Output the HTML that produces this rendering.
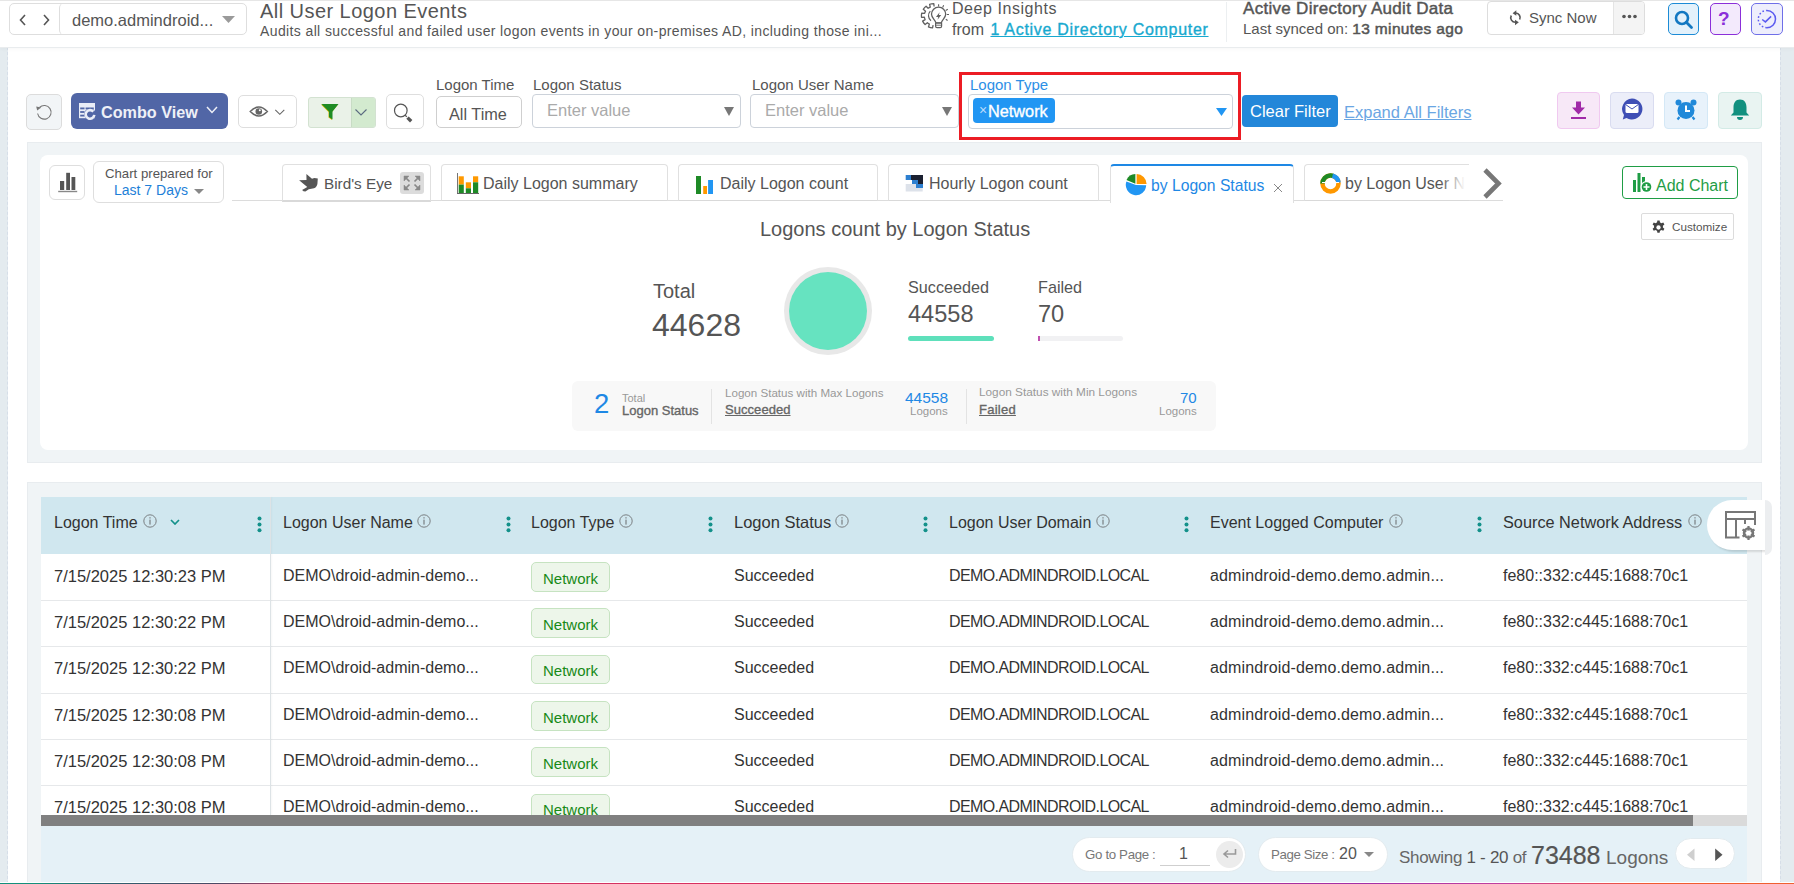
<!DOCTYPE html>
<html><head><meta charset="utf-8">
<style>
*{box-sizing:border-box;margin:0;padding:0}
html,body{width:1794px;height:884px;overflow:hidden;background:#fff;font-family:"Liberation Sans",sans-serif;color:#555}
.a{position:absolute}
.t{position:absolute;white-space:nowrap;line-height:1}
</style></head><body>
<!-- page strips -->
<div class="a" style="left:0;top:47px;width:8px;height:837px;background:#e4ebef;border-right:1px dashed #d6dee8"></div>
<div class="a" style="left:1780px;top:47px;width:14px;height:837px;background:#e4ebef;border-left:1px dashed #d6dee8"></div>
<!-- header -->
<div class="a" style="left:0;top:0;width:1794px;height:48px;background:#fff;border-bottom:1px solid #e9ecee;box-shadow:0 2px 3px rgba(0,0,0,.025)"></div>
<div class="a" style="left:0;top:0;width:1794px;height:1px;background:#e6e6e6"></div>


<!-- HEADER CONTENT -->
<div class="a" style="left:9px;top:3px;width:238px;height:32px;border:1px solid #dedede;border-radius:5px"></div>
<div class="a" style="left:59px;top:3px;width:188px;height:32px;border-left:1px solid #dedede;border-radius:5px"></div>
<svg class="a" style="left:18px;top:14px" width="34" height="12" viewBox="0 0 34 12"><path d="M7 1 L2.5 6 L7 11" fill="none" stroke="#555" stroke-width="1.6"/><path d="M26 1 L30.5 6 L26 11" fill="none" stroke="#555" stroke-width="1.6"/></svg>
<div class="t" style="left:72px;top:12px;font-size:16.5px;color:#555">demo.admindroid...</div>
<svg class="a" style="left:222px;top:16px" width="13" height="7"><path d="M0 0 H13 L6.5 7 Z" fill="#9a9a9a"/></svg>

<div class="t" style="left:260px;top:1px;font-size:20px;letter-spacing:0.45px;color:#555">All User Logon Events</div>
<div class="t" style="left:260px;top:24px;font-size:14px;letter-spacing:0.38px;color:#555">Audits all successful and failed user logon events in your on-premises AD, including those ini...</div>

<svg class="a" style="left:914px;top:0px" width="40" height="32" viewBox="0 0 40 32">
 <path d="M20.09 6.51 L19.81 3.60 A12.2 12.2 0 0 0 15.63 4.26 L16.27 7.12 A9.3 9.3 0 0 0 14.13 8.28 L12.09 6.19 A12.2 12.2 0 0 0 9.25 9.33 L11.55 11.15 A9.3 9.3 0 0 0 10.62 13.39 L7.71 13.06 A12.2 12.2 0 0 0 7.49 17.29 L10.41 17.25 A9.3 9.3 0 0 0 11.10 19.58 L8.63 21.15 A12.2 12.2 0 0 0 11.13 24.58 L13.38 22.71 A9.3 9.3 0 0 0 15.38 24.09 L14.44 26.86 A12.2 12.2 0 0 0 18.54 27.95 L19.11 25.09 " fill="none" stroke="#606060" stroke-width="1.3" stroke-linejoin="round"/>
 <path d="M16.3 11.2 A6.5 6.5 0 0 0 17 20.8" fill="none" stroke="#606060" stroke-width="1.2"/>
 <path d="M22 23 C21.5 20 17.5 18 17.5 14.3 A7.1 7.1 0 0 1 31.7 14.3 C31.7 18 27.7 20 27.2 23 Z" fill="#fff" stroke="#606060" stroke-width="1.3" stroke-linejoin="round"/>
 <path d="M21.6 23.2 H27.6 V26.2 Q27.6 27.6 26.2 27.6 H23 Q21.6 27.6 21.6 26.2 Z" fill="#fff" stroke="#606060" stroke-width="1.2"/>
 <path d="M21.8 25.2 H27.4" stroke="#606060" stroke-width="0.9"/>
 <path d="M25.6 12.2 L22 16.9 H24.3 L23.5 19.8 L27.2 15 H24.9 Z" fill="#606060"/>
 <path d="M24.6 4.2 V6.4 M29.7 5.3 L28.6 7.4 M33.8 9.3 L31.7 10.5 M35 14.5 H32.8 M33.6 20.5 L31.8 19.3" stroke="#606060" stroke-width="1.1"/>
</svg>
<div class="t" style="left:952px;top:1px;font-size:16px;letter-spacing:0.55px;color:#555">Deep Insights</div>
<div class="t" style="left:952px;top:22px;font-size:16px;color:#555">from <span style="color:#17a9cf;text-decoration:underline;letter-spacing:0.7px;margin-left:2px;-webkit-text-stroke:0.35px #17a9cf">1 Active Directory Computer</span></div>
<div class="a" style="left:1226px;top:2px;width:1px;height:40px;background:#eceff1"></div>
<div class="t" style="left:1243px;top:0px;font-size:17px;letter-spacing:0.3px;-webkit-text-stroke:0.45px #555;color:#555">Active Directory Audit Data</div>
<div class="t" style="left:1243px;top:21px;font-size:15px;color:#555">Last synced on: <span style="-webkit-text-stroke:0.5px #555;letter-spacing:0.35px;font-size:15.5px">13 minutes ago</span></div>

<div class="a" style="left:1487px;top:1px;width:158px;height:34px;border:1px solid #ddd;border-radius:4px;overflow:hidden"><div class="a" style="left:125px;top:0;width:33px;height:34px;background:#f4f4f4;border-left:1px solid #e4e4e4"></div></div>
<svg class="a" style="left:1508px;top:9px" width="16" height="17" viewBox="0 0 16 17"><path d="M7.8 4 A4.6 4.6 0 0 1 11.7 10.5" fill="none" stroke="#555" stroke-width="1.6"/><path d="M3.3 6.5 A4.6 4.6 0 0 0 7.5 13.3" fill="none" stroke="#555" stroke-width="1.6"/><path d="M8.3 1.2 L4.6 4.2 L8.3 6.8z" fill="#555"/><path d="M7 10.7 L10.8 13.3 L7 16.2z" fill="#555"/></svg>
<div class="t" style="left:1529px;top:10px;font-size:15px;color:#555">Sync Now</div>
<svg class="a" style="left:1622px;top:14px" width="15" height="5"><circle cx="2" cy="2.5" r="1.8" fill="#555"/><circle cx="7.5" cy="2.5" r="1.8" fill="#555"/><circle cx="13" cy="2.5" r="1.8" fill="#555"/></svg>

<div class="a" style="left:1668px;top:3px;width:31px;height:32px;border:1.5px solid #1c8bd6;border-radius:5px;background:#e3f1fb"></div>
<svg class="a" style="left:1674px;top:10px" width="20" height="20" viewBox="0 0 20 20"><circle cx="8" cy="8" r="6" fill="none" stroke="#1278c2" stroke-width="2.6"/><path d="M12.3 12.3 L17.5 17.5" stroke="#1278c2" stroke-width="2.8" stroke-linecap="round"/></svg>
<div class="a" style="left:1710px;top:3px;width:31px;height:32px;border:1.5px solid #8b2fd9;border-radius:5px;background:#f3eafc"></div>
<div class="t" style="left:1718px;top:9px;font-size:19px;font-weight:700;color:#8b2fd9">?</div>
<div class="a" style="left:1751px;top:3px;width:32px;height:32px;border:1.5px solid #6f6fe8;border-radius:5px;background:#eeeefc"></div>
<svg class="a" style="left:1757px;top:9px" width="21" height="21" viewBox="0 0 21 21"><path d="M9.9 1.5 A8.6 8.6 0 0 1 9.9 18.7" fill="none" stroke="#5b5bf0" stroke-width="1.5"/><path d="M9.9 18.7 A8.6 8.6 0 0 1 9.9 1.5" fill="none" stroke="#5b5bf0" stroke-width="1.5" stroke-dasharray="1.6 2.1"/><path d="M5.2 10.5 L8.4 12.9 L14.1 7.4" fill="none" stroke="#5b5bf0" stroke-width="1.5"/></svg>

<!-- content panels -->
<div class="a" style="left:27px;top:142px;width:1735px;height:321px;background:#f0f4f6;border:1px solid #e8ecef"></div>
<div class="a" style="left:40px;top:155px;width:1708px;height:295px;background:#fff;border-radius:8px"></div>
<div class="a" style="left:27px;top:482px;width:1735px;height:402px;background:#f0f4f6;border:1px solid #e8ecef"></div>


<!-- TOOLBAR -->
<div class="a" style="left:26px;top:94px;width:36px;height:36px;border:1px solid #dcdcdc;border-radius:5px;background:#f2f5f7"></div>
<svg class="a" style="left:34px;top:102px" width="20" height="20" viewBox="0 0 20 20"><path d="M5.5 5.5 A6.8 6.8 0 1 1 3.6 11.5" fill="none" stroke="#777" stroke-width="1.1"/><path d="M2.2 4.5 L7.2 5.6 L3.2 8.6z" fill="#777"/></svg>
<div class="a" style="left:71px;top:93px;width:157px;height:36px;border-radius:6px;background:#5166a6"></div>
<svg class="a" style="left:79px;top:103px" width="18" height="17" viewBox="0 0 18 17"><rect x="0" y="0" width="16" height="15.2" fill="#e9edf7"/><rect x="1.2" y="4.5" width="4.3" height="1.8" fill="#5166a6"/><rect x="1.2" y="8.1" width="4.3" height="1.8" fill="#5166a6"/><rect x="1.2" y="11.7" width="4.3" height="1.8" fill="#5166a6"/><rect x="6.6" y="4.5" width="8.2" height="1.8" fill="#5166a6"/><circle cx="11" cy="11.2" r="5.8" fill="#5166a6"/><path d="M14.3 8.6 A4.3 4.3 0 1 0 15.3 11.8" fill="none" stroke="#e9edf7" stroke-width="2.6"/><circle cx="11" cy="11.2" r="1.8" fill="#5166a6"/></svg>
<div class="t" style="left:101px;top:104px;font-size:16.2px;font-weight:700;color:#eef0f7">Combo View</div>
<svg class="a" style="left:206px;top:106px" width="12" height="8"><path d="M1 1 L6 6.5 L11 1" fill="none" stroke="#eef0f7" stroke-width="1.5"/></svg>

<div class="a" style="left:238px;top:95px;width:59px;height:33px;border:1px solid #dedede;border-radius:5px;background:#fff"></div>
<svg class="a" style="left:249px;top:104px" width="38" height="14" viewBox="0 0 38 14"><path d="M1.3 7.5 Q9.8 -1.5 18.3 7.5 Q9.8 16.5 1.3 7.5z" fill="none" stroke="#666" stroke-width="1.6"/><circle cx="9.8" cy="7.5" r="3.3" fill="#666"/><circle cx="10.8" cy="6.3" r="1" fill="#fff"/><path d="M26.3 5.8 L30.8 10.3 L35.3 5.8" fill="none" stroke="#666" stroke-width="1.1"/></svg>

<div class="a" style="left:308px;top:97px;width:68px;height:31px;border:1px solid #d3e2d1;border-radius:3px;background:#eaf2e8;overflow:hidden"><div class="a" style="left:42px;top:0;width:26px;height:31px;background:#d3eacf;border-left:1px solid #c8dcc5"></div></div>
<svg class="a" style="left:320px;top:103px" width="20" height="18" viewBox="0 0 20 18"><path d="M1 1.5 H18 L12 9 V17 L8.5 14.5 V9z" fill="#c9b400"/><path d="M1.5 1 H18.5 L12.5 8.5 V16.5 L9 14 V8.5z" fill="#1f8c24"/></svg>
<svg class="a" style="left:354px;top:108px" width="14" height="9"><path d="M1.5 1.5 L7 7 L12.5 1.5" fill="none" stroke="#5a6a80" stroke-width="1.1"/></svg>

<div class="a" style="left:386px;top:94px;width:38px;height:35px;border:1px solid #dedede;border-radius:5px;background:#fff"></div>
<svg class="a" style="left:392px;top:102px" width="24" height="24" viewBox="0 0 24 24"><circle cx="8.8" cy="8.5" r="6.3" fill="none" stroke="#555" stroke-width="1.2"/><path d="M13.2 13.3 L14.8 14.9" stroke="#555" stroke-width="1.3"/><path d="M15.5 15.6 L19.2 19.2" stroke="#555" stroke-width="3.4"/></svg>

<div class="t" style="left:436px;top:77.3px;font-size:15px;color:#555">Logon Time</div>
<div class="a" style="left:436px;top:96px;width:86px;height:32px;border:1px solid #cfcfcf;border-radius:5px;background:#fff"></div>
<div class="t" style="left:449px;top:105.5px;font-size:16.3px;color:#555">All Time</div>

<div class="t" style="left:533px;top:77.3px;font-size:15px;color:#555">Logon Status</div>
<div class="a" style="left:532px;top:94px;width:209px;height:34px;border:1px solid #ccd2da;border-radius:4px;background:#fff"></div>
<div class="t" style="left:547px;top:102.3px;font-size:16.5px;color:#aaa">Enter value</div>
<svg class="a" style="left:724px;top:107px" width="10" height="9"><path d="M0 0 H10 L5 9z" fill="#777"/></svg>

<div class="t" style="left:752px;top:77.3px;font-size:15px;color:#555">Logon User Name</div>
<div class="a" style="left:750px;top:94px;width:209px;height:34px;border:1px solid #ccd2da;border-radius:4px;background:#fff"></div>
<div class="t" style="left:765px;top:102.3px;font-size:16.5px;color:#aaa">Enter value</div>
<svg class="a" style="left:942px;top:107px" width="10" height="9"><path d="M0 0 H10 L5 9z" fill="#777"/></svg>

<div class="a" style="left:959px;top:72px;width:282px;height:68px;border:3px solid #ec1c24"></div>
<div class="t" style="left:970px;top:77.3px;font-size:15px;color:#2d8fe6">Logon Type</div>
<div class="a" style="left:968px;top:94px;width:265px;height:35px;border:1px solid #ccd2da;border-radius:4px;background:#fff"></div>
<div class="a" style="left:973px;top:98px;width:82px;height:25px;border-radius:4px;background:#2196f3"></div>
<div class="t" style="left:979px;top:103px;font-size:14px;color:#b9dcfb">×</div>
<div class="t" style="left:988px;top:102.5px;font-size:16.3px;-webkit-text-stroke:0.35px #fff;color:#fff">Network</div>
<svg class="a" style="left:1216px;top:108px" width="11" height="8"><path d="M0 0 H11 L5.5 8z" fill="#2196f3"/></svg>

<div class="a" style="left:1242px;top:95px;width:96px;height:32px;border-radius:4px;background:#2387d9"></div>
<div class="t" style="left:1250px;top:103px;font-size:16.5px;color:#fff">Clear Filter</div>
<div class="t" style="left:1344px;top:104px;font-size:16.5px;color:#6aa6e3;text-decoration:underline">Expand All Filters</div>

<div class="a" style="left:1557px;top:92px;width:43px;height:37px;border:1px solid #f0c9f0;border-radius:4px;background:#f7e8f7"></div>
<svg class="a" style="left:1570px;top:101px" width="17" height="19" viewBox="0 0 17 19"><path d="M6 0.5 h5 v6 h4 L8.5 13.5 L2 6.5 h4z" fill="#a02aa8"/><rect x="1" y="16" width="15" height="2" fill="#a02aa8"/></svg>
<div class="a" style="left:1610px;top:92px;width:44px;height:37px;border:1px solid #d9dcf0;border-radius:4px;background:#eceef9"></div>
<svg class="a" style="left:1620px;top:97px" width="24" height="24" viewBox="0 0 24 24"><path d="M12 1.5 a10.5 10.5 0 1 1 -5.5 19.5 L2.8 22.5 L4 18 A10.5 10.5 0 0 1 12 1.5z" fill="#3f4fb5"/><rect x="5.5" y="7" width="13" height="9" rx="1.5" fill="#fff"/><path d="M6 7.8 L12 12 L18 7.8" fill="none" stroke="#3f4fb5" stroke-width="1"/></svg>
<div class="a" style="left:1664px;top:92px;width:44px;height:37px;border:1px solid #d4e8f6;border-radius:4px;background:#e8f2fb"></div>
<svg class="a" style="left:1675px;top:99px" width="22" height="22" viewBox="0 0 22 22"><circle cx="3.5" cy="3.5" r="3" fill="#2189d9"/><circle cx="18.5" cy="3.5" r="3" fill="#2189d9"/><circle cx="11" cy="11.5" r="8.5" fill="#2189d9"/><path d="M11 6.5 V12 H15" fill="none" stroke="#fff" stroke-width="2"/><path d="M4.5 18 L2.5 20.5 M17.5 18 L19.5 20.5" stroke="#2189d9" stroke-width="2.2"/></svg>
<div class="a" style="left:1718px;top:92px;width:44px;height:37px;border:1px solid #d3ebe6;border-radius:4px;background:#e9f4f2"></div>
<svg class="a" style="left:1730px;top:98px" width="20" height="23" viewBox="0 0 20 23"><path d="M10 1.5 c-4.5 0 -6.5 3.5 -6.5 8 v5 L0.8 17.5 H19.2 L16.5 14.5 V9.5 c0 -4.5 -2 -8 -6.5 -8z" fill="#11907f"/><path d="M7 19 a3 3 0 0 0 6 0z" fill="#11907f"/></svg>


<!-- CHART PANEL -->
<div class="a" style="left:49px;top:165px;width:36px;height:35px;border:1px solid #dedede;border-radius:6px;background:#fff"></div>
<svg class="a" style="left:57px;top:172px" width="22" height="21" viewBox="0 0 22 21"><rect x="3" y="9" width="4.2" height="9" fill="#555"/><rect x="9.2" y="0.8" width="3.8" height="17.2" fill="#555"/><rect x="14.5" y="5" width="3.8" height="13" fill="#555"/><rect x="1.2" y="18.8" width="19" height="1.4" fill="#888"/></svg>
<div class="a" style="left:93px;top:161px;width:131px;height:42px;border:1px solid #dedede;border-radius:6px;background:#fff"></div>
<div class="t" style="left:105px;top:167px;font-size:13.2px;color:#555">Chart prepared for</div>
<div class="t" style="left:114px;top:183px;font-size:14px;color:#1e7fd8">Last 7 Days</div>
<svg class="a" style="left:194px;top:189px" width="10" height="5"><path d="M0 0 H10 L5 5z" fill="#888"/></svg>

<div class="a" style="left:232px;top:200px;width:1271px;height:1px;background:#dcdcdc"></div>
<!-- tabs -->
<div class="a" style="left:282px;top:164px;width:149px;height:38px;border:1px solid #e0e0e0;border-bottom:2px solid #d9d9d9;border-radius:4px 4px 0 0;background:#fff"></div>
<svg class="a" style="left:298px;top:173px" width="21" height="20" viewBox="0 0 21 20"><path d="M8.4 0.9 L14 5.8 L16.3 5 L19.8 5.4 L19.4 11 Q18.6 14.6 16 15.2 L10.8 16.2 L7.4 18.6 Q5.2 18.6 4.1 16.9 L9.3 14 L1.1 7.2 L8.5 6.9 Z" fill="#555"/></svg>
<div class="t" style="left:324px;top:176px;font-size:15.3px;color:#555">Bird's Eye</div>
<div class="a" style="left:400px;top:172px;width:24px;height:22px;border-radius:3px;background:#dcdcdc"></div>
<svg class="a" style="left:402px;top:174px" width="20" height="18" viewBox="0 0 20 18"><g fill="#888" stroke="#888" stroke-width="1.7"><path d="M3 3 L7.5 7.5 M17 3 L12.5 7.5 M3 15 L7.5 10.5 M17 15 L12.5 10.5" fill="none"/><path d="M2 2 H7 L2 7z M18 2 H13 L18 7z M2 16 H7 L2 11z M18 16 H13 L18 11z" stroke-width="0.5"/></g></svg>

<div class="a" style="left:441px;top:164px;width:227px;height:37px;border:1px solid #e0e0e0;border-bottom:1px solid #d9d9d9;border-radius:4px 4px 0 0;background:#fff"></div>
<svg class="a" style="left:457px;top:173px" width="23" height="21" viewBox="0 0 23 21"><rect x="0" y="0" width="0.9" height="21" fill="#666"/><rect x="0" y="20" width="22" height="1" fill="#666"/><rect x="1.7" y="3.3" width="5.1" height="8.3" fill="#ff9900"/><rect x="1.7" y="11.6" width="5.1" height="8.4" fill="#1e8a26"/><rect x="8.8" y="9.3" width="5.2" height="6" fill="#ff9900"/><rect x="8.8" y="15.3" width="5.2" height="4.7" fill="#1e8a26"/><rect x="16" y="3.3" width="5.2" height="6" fill="#ff9900"/><rect x="16" y="9.3" width="5.2" height="10.7" fill="#1e8a26"/></svg>
<div class="t" style="left:483px;top:176px;font-size:16px;color:#555">Daily Logon summary</div>

<div class="a" style="left:678px;top:164px;width:200px;height:37px;border:1px solid #e0e0e0;border-bottom:1px solid #d9d9d9;border-radius:4px 4px 0 0;background:#fff"></div>
<svg class="a" style="left:695px;top:176px" width="19" height="19" viewBox="0 0 19 19"><rect x="1" y="0" width="5" height="18" fill="#1e8a26"/><rect x="8.2" y="10" width="3.8" height="8" fill="#ff9900"/><rect x="13.1" y="4" width="4.9" height="14" fill="#2196f3"/></svg>
<div class="t" style="left:720px;top:176px;font-size:16px;color:#555">Daily Logon count</div>

<div class="a" style="left:888px;top:164px;width:211px;height:37px;border:1px solid #e0e0e0;border-bottom:1px solid #d9d9d9;border-radius:4px 4px 0 0;background:#fff"></div>
<svg class="a" style="left:905px;top:174px" width="19" height="18" viewBox="0 0 19 18"><rect x="0.7" y="10" width="17" height="7.5" fill="#dde2ea"/><path d="M0.7 1 H18 V14 H11 V10 H7 V6 H0.7z" fill="#2d7fd0"/><path d="M6 1 H18 V10 H13 V6 H6z" fill="#1b2030"/></svg>
<div class="t" style="left:929px;top:176px;font-size:16px;color:#555">Hourly Logon count</div>

<div class="a" style="left:1110px;top:164px;width:184px;height:39px;border:1px solid #e0e0e0;border-top:2.5px solid #1e88e5;border-bottom:none;border-radius:4px 4px 0 0;background:#fff"></div>
<svg class="a" style="left:1124px;top:172px" width="24" height="25" viewBox="0 0 24 25"><path d="M12 12.9 L22.19 13.26 A10.2 10.2 0 1 1 2.42 9.41 Z" fill="#2196f3"/><path d="M12.6 12.0 L12.60 2.00 A10.0 10.0 0 0 1 22.60 12.00 Z" fill="#ff9800"/><path d="M11.4 11.7 L2.50 8.10 A9.6 9.6 0 0 1 11.40 2.10 Z" fill="#1e8a26"/></svg>
<div class="t" style="left:1151px;top:178px;font-size:15.7px;color:#1e88e5">by Logon Status</div>
<svg class="a" style="left:1273px;top:183px" width="10" height="10"><path d="M1 1 L9 9 M9 1 L1 9" stroke="#888" stroke-width="1"/></svg>

<div class="a" style="left:1304px;top:164px;width:165px;height:37px;border:1px solid #e0e0e0;border-bottom:1px solid #d9d9d9;border-right:none;border-radius:4px 0 0 0;background:#fff;overflow:hidden"></div>
<svg class="a" style="left:1319px;top:172px" width="23" height="23" viewBox="0 0 23 23"><circle cx="11.5" cy="11.5" r="8" fill="none" stroke="#ff9800" stroke-width="4.5"/><path d="M3.5 11.5 A8 8 0 0 1 11 3.5" fill="none" stroke="#1e8a26" stroke-width="4.5"/><path d="M11 3.5 A8 8 0 0 1 14.5 4" fill="none" stroke="#1e8a26" stroke-width="4.5"/><path d="M13.5 3.8 A8 8 0 0 1 19.5 10.5" fill="none" stroke="#2196f3" stroke-width="4.5"/><path d="M3 10.5 H8 M15 10.5 H20" stroke="#fff" stroke-width="1"/></svg>
<div class="a" style="left:1345px;top:176px;width:120px;height:22px;overflow:hidden"><div class="t" style="left:0;top:0;font-size:16px;color:#555">by Logon User Name</div><div class="a" style="left:95px;top:0;width:25px;height:22px;background:linear-gradient(to right,rgba(255,255,255,0),#fff)"></div></div>
<svg class="a" style="left:1480px;top:167px" width="25" height="33" viewBox="0 0 25 33"><path d="M5 3 L18.5 16.5 L5 30" fill="none" stroke="#777" stroke-width="4.6"/></svg>

<div class="a" style="left:1622px;top:166px;width:116px;height:33px;border:1.5px solid #1f9d45;border-radius:4px;background:#fff"></div>
<svg class="a" style="left:1632px;top:172px" width="21" height="22" viewBox="0 0 21 22"><rect x="1" y="8" width="3" height="12" fill="#1f9d45"/><rect x="5.5" y="1" width="3" height="19" fill="#1f9d45"/><rect x="10" y="5" width="3" height="6" fill="#1f9d45"/><circle cx="14.5" cy="15" r="6" fill="#fff"/><circle cx="14.5" cy="15" r="4.8" fill="#1f9d45"/><path d="M14.5 12 V18 M11.5 15 H17.5" stroke="#fff" stroke-width="1.6"/></svg>
<div class="t" style="left:1656px;top:177.5px;font-size:16px;color:#1f9d45">Add Chart</div>

<div class="a" style="left:1641px;top:213px;width:93px;height:27px;border:1px solid #dcdcdc;border-radius:2px;background:#fff"></div>
<svg class="a" style="left:1650.5px;top:219.5px" width="15" height="15" viewBox="0 0 16 16"><path d="M6.8 0.5 h2.4 l.4 2.1 a5.5 5.5 0 0 1 1.5 .9 l2-.8 1.2 2.1 -1.6 1.4 a5.5 5.5 0 0 1 0 1.7 l1.6 1.4 -1.2 2.1 -2-.8 a5.5 5.5 0 0 1 -1.5 .9 l-.4 2.1 h-2.4 l-.4-2.1 a5.5 5.5 0 0 1 -1.5-.9 l-2 .8 -1.2-2.1 1.6-1.4 a5.5 5.5 0 0 1 0-1.7 l-1.6-1.4 1.2-2.1 2 .8 a5.5 5.5 0 0 1 1.5-.9z" fill="#444"/><circle cx="8" cy="8" r="2.3" fill="#fff"/></svg>
<div class="t" style="left:1672px;top:221px;font-size:11.7px;color:#555">Customize</div>

<div class="t" style="left:760px;top:219px;font-size:20px;color:#555">Logons count by Logon Status</div>

<div class="t" style="left:653px;top:281px;font-size:20px;color:#555">Total</div>
<div class="t" style="left:652px;top:309px;font-size:32px;color:#555">44628</div>
<div class="a" style="left:784px;top:267px;width:88px;height:88px;border-radius:50%;background:#e8e8e8"></div>
<div class="a" style="left:789px;top:272px;width:78px;height:78px;border-radius:50%;background:#66e3c0"></div>
<div class="t" style="left:908px;top:279px;font-size:16.2px;color:#555">Succeeded</div>
<div class="t" style="left:908px;top:303px;font-size:23.6px;color:#555">44558</div>
<div class="a" style="left:908px;top:336px;width:86px;height:5px;border-radius:3px;background:#5ee0bb"></div>
<div class="t" style="left:1038px;top:279px;font-size:16.2px;color:#555">Failed</div>
<div class="t" style="left:1038px;top:303px;font-size:23.6px;color:#555">70</div>
<div class="a" style="left:1038px;top:336px;width:85px;height:5px;border-radius:3px;background:#f1f1f3"></div>
<div class="a" style="left:1038px;top:336px;width:1.5px;height:5px;background:#c04fb0"></div>

<div class="a" style="left:572px;top:381px;width:644px;height:50px;border-radius:6px;background:#f8f8f8"></div>
<div class="t" style="left:594px;top:390px;font-size:27.5px;color:#1e88e5">2</div>
<div class="t" style="left:622px;top:393px;font-size:11px;color:#999">Total</div>
<div class="t" style="left:622px;top:404px;font-size:13px;color:#666;-webkit-text-stroke:0.35px #666">Logon Status</div>
<div class="a" style="left:711px;top:389px;width:1px;height:35px;background:#e3e3e3"></div>
<div class="t" style="left:725px;top:387px;font-size:11.6px;color:#999">Logon Status with Max Logons</div>
<div class="t" style="left:725px;top:403px;font-size:13px;color:#666;-webkit-text-stroke:0.35px #666;letter-spacing:0.05px;text-decoration:underline">Succeeded</div>
<div class="t" style="left:905px;top:390px;font-size:15.5px;color:#1e88e5">44558</div>
<div class="t" style="left:910px;top:406px;font-size:11.5px;color:#999">Logons</div>
<div class="a" style="left:966px;top:389px;width:1px;height:35px;background:#e3e3e3"></div>
<div class="t" style="left:979px;top:387px;font-size:11.8px;color:#999">Logon Status with Min Logons</div>
<div class="t" style="left:979px;top:403px;font-size:13px;color:#666;-webkit-text-stroke:0.35px #666;letter-spacing:0.25px;text-decoration:underline">Failed</div>
<div class="t" style="left:1180px;top:390px;font-size:15px;color:#1e88e5">70</div>
<div class="t" style="left:1159px;top:406px;font-size:11.5px;color:#999">Logons</div>

<!-- TABLE -->
<div class="a" style="left:41px;top:497px;width:1706px;height:57px;background:#d0e7ef"></div>
<div class="t" style="left:54px;top:515px;font-size:16px;color:#333">Logon Time</div>
<svg class="a" style="left:142.6px;top:513.5px" width="14" height="14" viewBox="0 0 14 14"><circle cx="7" cy="7" r="6.2" fill="none" stroke="#7a7f82" stroke-width="1"/><rect x="6.4" y="5.6" width="1.2" height="5" fill="#7a7f82"/><rect x="6.4" y="3.2" width="1.2" height="1.3" fill="#7a7f82"/></svg>
<div class="t" style="left:283px;top:515px;font-size:16px;color:#333">Logon User Name</div>
<svg class="a" style="left:417.0px;top:513.5px" width="14" height="14" viewBox="0 0 14 14"><circle cx="7" cy="7" r="6.2" fill="none" stroke="#7a7f82" stroke-width="1"/><rect x="6.4" y="5.6" width="1.2" height="5" fill="#7a7f82"/><rect x="6.4" y="3.2" width="1.2" height="1.3" fill="#7a7f82"/></svg>
<div class="t" style="left:531px;top:515px;font-size:16px;color:#333">Logon Type</div>
<svg class="a" style="left:618.6px;top:513.5px" width="14" height="14" viewBox="0 0 14 14"><circle cx="7" cy="7" r="6.2" fill="none" stroke="#7a7f82" stroke-width="1"/><rect x="6.4" y="5.6" width="1.2" height="5" fill="#7a7f82"/><rect x="6.4" y="3.2" width="1.2" height="1.3" fill="#7a7f82"/></svg>
<div class="t" style="left:734px;top:514.3px;font-size:16.5px;color:#333">Logon Status</div>
<svg class="a" style="left:835.0px;top:513.5px" width="14" height="14" viewBox="0 0 14 14"><circle cx="7" cy="7" r="6.2" fill="none" stroke="#7a7f82" stroke-width="1"/><rect x="6.4" y="5.6" width="1.2" height="5" fill="#7a7f82"/><rect x="6.4" y="3.2" width="1.2" height="1.3" fill="#7a7f82"/></svg>
<div class="t" style="left:949px;top:515px;font-size:16px;color:#333">Logon User Domain</div>
<svg class="a" style="left:1095.8px;top:513.5px" width="14" height="14" viewBox="0 0 14 14"><circle cx="7" cy="7" r="6.2" fill="none" stroke="#7a7f82" stroke-width="1"/><rect x="6.4" y="5.6" width="1.2" height="5" fill="#7a7f82"/><rect x="6.4" y="3.2" width="1.2" height="1.3" fill="#7a7f82"/></svg>
<div class="t" style="left:1210px;top:515px;font-size:16px;color:#333">Event Logged Computer</div>
<svg class="a" style="left:1388.6px;top:513.5px" width="14" height="14" viewBox="0 0 14 14"><circle cx="7" cy="7" r="6.2" fill="none" stroke="#7a7f82" stroke-width="1"/><rect x="6.4" y="5.6" width="1.2" height="5" fill="#7a7f82"/><rect x="6.4" y="3.2" width="1.2" height="1.3" fill="#7a7f82"/></svg>
<div class="t" style="left:1503px;top:513.5px;font-size:16.3px;color:#333">Source Network Address</div>
<svg class="a" style="left:1687.6px;top:513.5px" width="14" height="14" viewBox="0 0 14 14"><circle cx="7" cy="7" r="6.2" fill="none" stroke="#7a7f82" stroke-width="1"/><rect x="6.4" y="5.6" width="1.2" height="5" fill="#7a7f82"/><rect x="6.4" y="3.2" width="1.2" height="1.3" fill="#7a7f82"/></svg>
<svg class="a" style="left:257.0px;top:515.5px" width="5" height="17"><circle cx="2.5" cy="2.5" r="2" fill="#13918a"/><circle cx="2.5" cy="8.5" r="2" fill="#13918a"/><circle cx="2.5" cy="14.3" r="2" fill="#13918a"/></svg>
<svg class="a" style="left:505.5px;top:515.5px" width="5" height="17"><circle cx="2.5" cy="2.5" r="2" fill="#13918a"/><circle cx="2.5" cy="8.5" r="2" fill="#13918a"/><circle cx="2.5" cy="14.3" r="2" fill="#13918a"/></svg>
<svg class="a" style="left:707.5px;top:515.5px" width="5" height="17"><circle cx="2.5" cy="2.5" r="2" fill="#13918a"/><circle cx="2.5" cy="8.5" r="2" fill="#13918a"/><circle cx="2.5" cy="14.3" r="2" fill="#13918a"/></svg>
<svg class="a" style="left:922.5px;top:515.5px" width="5" height="17"><circle cx="2.5" cy="2.5" r="2" fill="#13918a"/><circle cx="2.5" cy="8.5" r="2" fill="#13918a"/><circle cx="2.5" cy="14.3" r="2" fill="#13918a"/></svg>
<svg class="a" style="left:1183.5px;top:515.5px" width="5" height="17"><circle cx="2.5" cy="2.5" r="2" fill="#13918a"/><circle cx="2.5" cy="8.5" r="2" fill="#13918a"/><circle cx="2.5" cy="14.3" r="2" fill="#13918a"/></svg>
<svg class="a" style="left:1476.5px;top:515.5px" width="5" height="17"><circle cx="2.5" cy="2.5" r="2" fill="#13918a"/><circle cx="2.5" cy="8.5" r="2" fill="#13918a"/><circle cx="2.5" cy="14.3" r="2" fill="#13918a"/></svg>
<svg class="a" style="left:170px;top:519px" width="10" height="6"><path d="M1 1 L5 5 L9 1" fill="none" stroke="#13918a" stroke-width="1.7"/></svg>
<div class="a" style="left:41px;top:554px;width:1706px;height:262px;background:#fff;overflow:hidden"><div class="a" style="left:0;top:0.9px;width:1706px;height:262px">
<div class="a" style="left:0;top:0.0px;width:1706px;height:46.3px;border-bottom:1px solid #e6e8ea">
<div class="t" style="left:13px;top:13px;font-size:16.5px;color:#333">7/15/2025 12:30:23 PM</div>
<div class="t" style="left:242px;top:13px;font-size:16px;color:#333">DEMO\droid-admin-demo...</div>
<div class="a" style="left:490px;top:7.3px;width:79px;height:29.5px;border:1px solid #c6e3c1;border-radius:5px;background:#edf6ea"></div>
<div class="t" style="left:502px;top:16px;font-size:15px;color:#178a17">Network</div>
<div class="t" style="left:693px;top:13px;font-size:16px;color:#333">Succeeded</div>
<div class="t" style="left:908px;top:13px;font-size:16px;letter-spacing:-0.6px;color:#333">DEMO.ADMINDROID.LOCAL</div>
<div class="t" style="left:1169px;top:13px;font-size:16px;letter-spacing:0.13px;color:#333">admindroid-demo.demo.admin...</div>
<div class="t" style="left:1462px;top:13px;font-size:16px;color:#333">fe80::332:c445:1688:70c1</div>
</div>
<div class="a" style="left:0;top:46.3px;width:1706px;height:46.3px;border-bottom:1px solid #e6e8ea">
<div class="t" style="left:13px;top:13px;font-size:16.5px;color:#333">7/15/2025 12:30:22 PM</div>
<div class="t" style="left:242px;top:13px;font-size:16px;color:#333">DEMO\droid-admin-demo...</div>
<div class="a" style="left:490px;top:7.3px;width:79px;height:29.5px;border:1px solid #c6e3c1;border-radius:5px;background:#edf6ea"></div>
<div class="t" style="left:502px;top:16px;font-size:15px;color:#178a17">Network</div>
<div class="t" style="left:693px;top:13px;font-size:16px;color:#333">Succeeded</div>
<div class="t" style="left:908px;top:13px;font-size:16px;letter-spacing:-0.6px;color:#333">DEMO.ADMINDROID.LOCAL</div>
<div class="t" style="left:1169px;top:13px;font-size:16px;letter-spacing:0.13px;color:#333">admindroid-demo.demo.admin...</div>
<div class="t" style="left:1462px;top:13px;font-size:16px;color:#333">fe80::332:c445:1688:70c1</div>
</div>
<div class="a" style="left:0;top:92.6px;width:1706px;height:46.3px;border-bottom:1px solid #e6e8ea">
<div class="t" style="left:13px;top:13px;font-size:16.5px;color:#333">7/15/2025 12:30:22 PM</div>
<div class="t" style="left:242px;top:13px;font-size:16px;color:#333">DEMO\droid-admin-demo...</div>
<div class="a" style="left:490px;top:7.3px;width:79px;height:29.5px;border:1px solid #c6e3c1;border-radius:5px;background:#edf6ea"></div>
<div class="t" style="left:502px;top:16px;font-size:15px;color:#178a17">Network</div>
<div class="t" style="left:693px;top:13px;font-size:16px;color:#333">Succeeded</div>
<div class="t" style="left:908px;top:13px;font-size:16px;letter-spacing:-0.6px;color:#333">DEMO.ADMINDROID.LOCAL</div>
<div class="t" style="left:1169px;top:13px;font-size:16px;letter-spacing:0.13px;color:#333">admindroid-demo.demo.admin...</div>
<div class="t" style="left:1462px;top:13px;font-size:16px;color:#333">fe80::332:c445:1688:70c1</div>
</div>
<div class="a" style="left:0;top:138.9px;width:1706px;height:46.3px;border-bottom:1px solid #e6e8ea">
<div class="t" style="left:13px;top:13px;font-size:16.5px;color:#333">7/15/2025 12:30:08 PM</div>
<div class="t" style="left:242px;top:13px;font-size:16px;color:#333">DEMO\droid-admin-demo...</div>
<div class="a" style="left:490px;top:7.3px;width:79px;height:29.5px;border:1px solid #c6e3c1;border-radius:5px;background:#edf6ea"></div>
<div class="t" style="left:502px;top:16px;font-size:15px;color:#178a17">Network</div>
<div class="t" style="left:693px;top:13px;font-size:16px;color:#333">Succeeded</div>
<div class="t" style="left:908px;top:13px;font-size:16px;letter-spacing:-0.6px;color:#333">DEMO.ADMINDROID.LOCAL</div>
<div class="t" style="left:1169px;top:13px;font-size:16px;letter-spacing:0.13px;color:#333">admindroid-demo.demo.admin...</div>
<div class="t" style="left:1462px;top:13px;font-size:16px;color:#333">fe80::332:c445:1688:70c1</div>
</div>
<div class="a" style="left:0;top:185.2px;width:1706px;height:46.3px;border-bottom:1px solid #e6e8ea">
<div class="t" style="left:13px;top:13px;font-size:16.5px;color:#333">7/15/2025 12:30:08 PM</div>
<div class="t" style="left:242px;top:13px;font-size:16px;color:#333">DEMO\droid-admin-demo...</div>
<div class="a" style="left:490px;top:7.3px;width:79px;height:29.5px;border:1px solid #c6e3c1;border-radius:5px;background:#edf6ea"></div>
<div class="t" style="left:502px;top:16px;font-size:15px;color:#178a17">Network</div>
<div class="t" style="left:693px;top:13px;font-size:16px;color:#333">Succeeded</div>
<div class="t" style="left:908px;top:13px;font-size:16px;letter-spacing:-0.6px;color:#333">DEMO.ADMINDROID.LOCAL</div>
<div class="t" style="left:1169px;top:13px;font-size:16px;letter-spacing:0.13px;color:#333">admindroid-demo.demo.admin...</div>
<div class="t" style="left:1462px;top:13px;font-size:16px;color:#333">fe80::332:c445:1688:70c1</div>
</div>
<div class="a" style="left:0;top:231.5px;width:1706px;height:46.3px;border-bottom:1px solid #e6e8ea">
<div class="t" style="left:13px;top:13px;font-size:16.5px;color:#333">7/15/2025 12:30:08 PM</div>
<div class="t" style="left:242px;top:13px;font-size:16px;color:#333">DEMO\droid-admin-demo...</div>
<div class="a" style="left:490px;top:7.3px;width:79px;height:29.5px;border:1px solid #c6e3c1;border-radius:5px;background:#edf6ea"></div>
<div class="t" style="left:502px;top:16px;font-size:15px;color:#178a17">Network</div>
<div class="t" style="left:693px;top:13px;font-size:16px;color:#333">Succeeded</div>
<div class="t" style="left:908px;top:13px;font-size:16px;letter-spacing:-0.6px;color:#333">DEMO.ADMINDROID.LOCAL</div>
<div class="t" style="left:1169px;top:13px;font-size:16px;letter-spacing:0.13px;color:#333">admindroid-demo.demo.admin...</div>
<div class="t" style="left:1462px;top:13px;font-size:16px;color:#333">fe80::332:c445:1688:70c1</div>
</div>
</div></div>
<div class="a" style="left:270px;top:497px;width:1px;height:319px;background:#dde3e6;box-shadow:1px 0 2px rgba(0,0,0,.05)"></div>
<div class="a" style="left:41px;top:815px;width:1706px;height:11px;background:#dadada"></div>
<div class="a" style="left:41px;top:815px;width:1652px;height:11px;background:#808080"></div>
<div class="a" style="left:41px;top:826px;width:1706px;height:56px;background:#e5f1f7"></div>
<div class="a" style="left:1072px;top:837px;width:174px;height:35px;border-radius:18px;background:#fff;border:1px solid #e3ebef"></div>
<div class="t" style="left:1085px;top:848px;font-size:13.3px;letter-spacing:-0.35px;color:#777">Go to Page :</div>
<div class="t" style="left:1179px;top:846px;font-size:16px;color:#555">1</div>
<div class="a" style="left:1160px;top:865px;width:50px;height:1px;background:#cfcfcf"></div>
<div class="a" style="left:1216px;top:841px;width:27px;height:27px;border-radius:50%;background:#ececec"></div>
<svg class="a" style="left:1222px;top:848px" width="15" height="12" viewBox="0 0 15 12"><path d="M13.5 1 V6 H2.5 M6 2.5 L2 6 L6 9.5" fill="none" stroke="#999" stroke-width="1.6"/></svg>
<div class="a" style="left:1258px;top:837px;width:130px;height:35px;border-radius:18px;background:#fff;border:1px solid #e3ebef"></div>
<div class="t" style="left:1271px;top:848px;font-size:13.3px;letter-spacing:-0.4px;color:#777">Page Size :</div>
<div class="t" style="left:1339px;top:846px;font-size:16px;color:#555">20</div>
<svg class="a" style="left:1364px;top:852px" width="10" height="5"><path d="M0 0 H10 L5 5z" fill="#888"/></svg>
<div class="t" style="left:1399px;top:849px;font-size:17px;letter-spacing:-0.3px;color:#666">Showing <span style="color:#555">1 - 20</span> of</div>
<div class="t" style="left:1531px;top:843px;font-size:25px;color:#555;-webkit-text-stroke:0.2px #555">73488</div>
<div class="t" style="left:1606px;top:848px;font-size:19px;color:#666">Logons</div>
<div class="a" style="left:1675px;top:838px;width:60px;height:31px;border-radius:16px;background:#fff;border:1px solid #e3ebef"></div>
<svg class="a" style="left:1686px;top:848px" width="10" height="14"><path d="M8.5 0.5 V13 L1 6.8z" fill="#cfcfcf"/></svg>
<svg class="a" style="left:1714px;top:848px" width="10" height="14"><path d="M1.2 0.5 V13 L8.5 6.8z" fill="#555"/></svg>

<div class="a" style="left:1707px;top:500px;width:59px;height:50px;border-radius:25px 0 0 25px;background:#fff;box-shadow:2px 2px 2px rgba(0,0,0,.12)"></div>
<div class="a" style="left:1765px;top:500px;width:7px;height:55px;border-radius:0 8px 8px 0;background:#eceef0"></div>
<svg class="a" style="left:1725px;top:511px" width="32" height="30" viewBox="0 0 32 30"><path d="M1 11 V1 H30 V14 M1 8 H30 M1 11 V26.5 H14.5 M11 8 V26.5 M20 8 V13" fill="none" stroke="#777" stroke-width="2"/><g transform="translate(23.5 22)"><circle r="4.6" fill="none" stroke="#777" stroke-width="2.3"/><path d="M0 -7 V7 M-6 -3.5 L6 3.5 M-6 3.5 L6 -3.5" stroke="#777" stroke-width="2.2"/><circle r="2.6" fill="#fff"/></g></svg>

<div class="a" style="left:0;top:882px;width:1794px;height:1px;background:#fff"></div>
<div class="a" style="left:0;top:883px;width:1794px;height:1px;background:linear-gradient(to right,#13907c 0%,#14907c 2%,#2e6070 6%,#4a4a66 12%,#c83868 17%,#d83060 40%,#d03068 55%,#b03090 64%,#a030a8 76%,#c040a0 84%,#e04868 88%,#f05a30 92%,#f06030 100%)"></div>
</body></html>
